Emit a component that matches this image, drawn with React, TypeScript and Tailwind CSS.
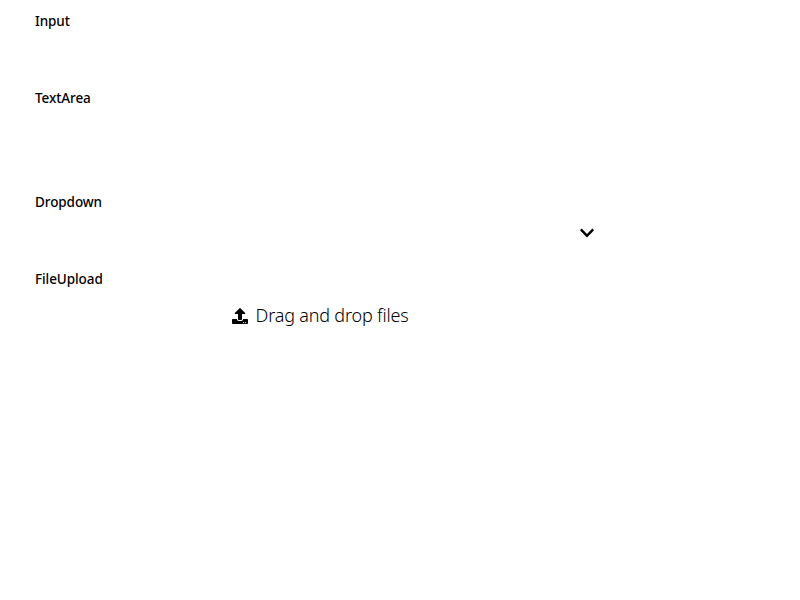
import { FaChevronDown, FaUpload } from "react-icons/fa";

const label = "block text-[13.5px] leading-5 font-medium tracking-[-0.08px]";

export default function App() {
  return (
    <main className="h-[600px] w-[800px] overflow-hidden bg-white pt-[11px] pl-[35px] font-['Noto_Sans',sans-serif] text-black">
      <form className="flex w-[570px] flex-col">
        <div className="h-[77px]">
          <label className={label}>Input</label>
        </div>
        <div className="h-[104px]">
          <label className={label}>TextArea</label>
        </div>
        <div className="h-[77px]">
          <label className={label}>Dropdown</label>
          <div className="flex h-[29px] items-end justify-end pr-[10px]">
            <FaChevronDown className="size-4" />
          </div>
        </div>
        <div>
          <label className={label}>FileUpload</label>
          <div className="mt-[15px] flex h-6 items-center justify-center gap-2">
            <FaUpload className="size-4" />
            <span className="pb-0.5 text-[18px] leading-6 font-light tracking-[-0.19px] whitespace-nowrap">Drag and drop files</span>
          </div>
        </div>
      </form>
    </main>
  );
}
